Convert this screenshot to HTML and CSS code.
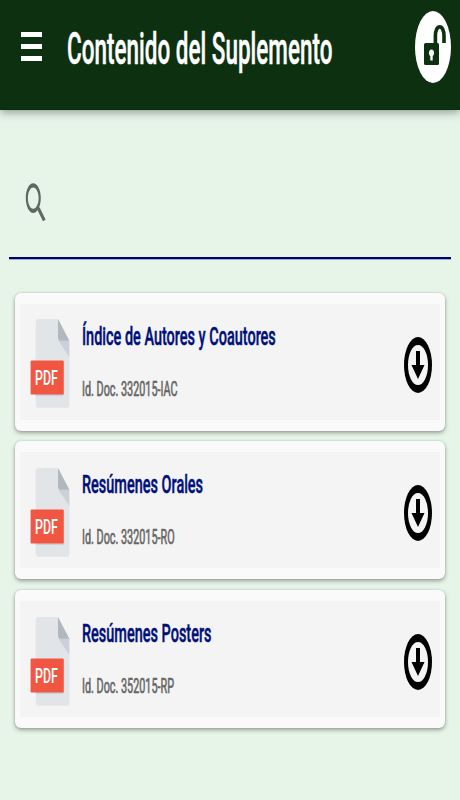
FILE: index.html
```html
<!DOCTYPE html>
<html lang="es">
<head>
    <meta charset="UTF-8">
    <meta name="viewport" content="width=device-width, initial-scale=1.0">
    <title>Contenido del Suplemento</title>
    <link rel="stylesheet" href="styles.css">
</head>
<body>
    <!-- Shared icons -->
    <svg class="sprite">
        <symbol id="pdf" viewBox="0 0 40 90" preserveAspectRatio="none">
            <path d="M8 0H28L39.3 21.5V86Q39.3 88.7 37 88.7H8Q5.7 88.7 5.7 85V4Q5.7 0 8 0Z" fill="#e1e5e8"/>
            <path d="M28.5 21.8H39.3V38Z" fill="#cad1d8"/>
            <path d="M28 0L39.3 21.8H30Q28 21.8 28 18Z" fill="#b0b7bd"/>
            <path d="M5.7 75H33.5V77H5.7Z" fill="#cad1d8"/>
            <rect x="0.6" y="41.6" width="33.2" height="34" rx="1.2" fill="#f15642"/>
        </symbol>
        <symbol id="download" viewBox="0 0 28 56">
            <ellipse cx="14" cy="28" rx="14" ry="28"/>
            <ellipse cx="14" cy="28" rx="10" ry="20" fill="#f4f4f4"/>
            <path d="M12 14H16V28H20.5L14 42L7.5 28H12Z"/>
        </symbol>
    </svg>

    <header class="toolbar">
        <button class="menu-btn" aria-label="Menu"><i></i><i></i><i></i></button>
        <h1><span>Contenido del Suplemento</span></h1>
        <svg class="lock" width="36" height="72" viewBox="0 0 36 72">
            <ellipse cx="18" cy="36" rx="18" ry="36" fill="#fff"/>
            <path d="M20.4 34V25C20.4 12.8 29 12.8 29 25V32" fill="none" stroke="#0d3010" stroke-width="3.6"/>
            <rect x="9" y="32" width="15" height="22" rx="1.5" fill="#0d3010"/>
            <path d="M16.5 38.5C19.8 38.5 19.6 44 17.7 45V49.5H15.3V45C13.4 44 13.2 38.5 16.5 38.5Z" fill="#fff"/>
        </svg>
    </header>

    <main>
        <div class="search">
            <svg width="22" height="42" viewBox="0 0 22 42" fill="none" stroke="#5f6962">
                <path d="M13.2 26L19.3 38.5" stroke-width="3"/>
                <path fill="#5f6962" stroke="none" fill-rule="evenodd" d="M8.2 1.2C12.5 1.2 15.8 8 15.8 16S12.5 31 8.2 31S0.8 24 0.8 16S3.9 1.2 8.2 1.2ZM8.2 5.4C5.2 5.4 2.9 10.2 2.9 16S5.2 26.8 8.2 26.8S13.6 21.8 13.6 16S11.2 5.4 8.2 5.4Z"/>
            </svg>
        </div>

        <div class="card">
            <div class="card-inner">
                <div class="file-icon">
                    <svg><use href="#pdf"/></svg>
                    <span>PDF</span>
                </div>
                <div class="info">
                    <h2><span>Índice de Autores y Coautores</span></h2>
                    <p><span>Id. Doc. 332015-IAC</span></p>
                </div>
                <svg class="download"><use href="#download"/></svg>
            </div>
        </div>

        <div class="card">
            <div class="card-inner">
                <div class="file-icon">
                    <svg><use href="#pdf"/></svg>
                    <span>PDF</span>
                </div>
                <div class="info">
                    <h2><span>Resúmenes Orales</span></h2>
                    <p><span>Id. Doc. 332015-RO</span></p>
                </div>
                <svg class="download"><use href="#download"/></svg>
            </div>
        </div>

        <div class="card">
            <div class="card-inner">
                <div class="file-icon">
                    <svg><use href="#pdf"/></svg>
                    <span>PDF</span>
                </div>
                <div class="info">
                    <h2><span>Resúmenes Posters</span></h2>
                    <p><span>Id. Doc. 352015-RP</span></p>
                </div>
                <svg class="download"><use href="#download"/></svg>
            </div>
        </div>
    </main>
</body>
</html>
```
FILE: styles.css
```css
* {
    box-sizing: border-box;
}
body {
    font-family: Roboto, sans-serif;
    margin: 0;
    height: 100vh;
    overflow: hidden;
    background-color: #e7f5e8;
}
.sprite {
    display: none;
}
h1, h2, p {
    margin: 0;
    white-space: nowrap;
}
/* condensed lettering */
h1 span, h2 span, p span, .file-icon span {
    display: inline-block;
    transform-origin: left center;
    -webkit-text-stroke: 0.5px currentColor;
}
.toolbar {
    display: flex;
    align-items: flex-start;
    height: 110px;
    padding: 11px 9px 0 21px;
    background-color: #0d3010;
    border-bottom: 1px solid #092a0d;
    box-shadow: 0 2px 9px rgba(0,0,0,0.4);
}
.menu-btn {
    display: flex;
    flex-direction: column;
    gap: 7px;
    width: 21px;
    margin-top: 21px;
    padding: 0;
    border: none;
    background: none;
}
.menu-btn i {
    width: 21px;
    height: 5px;
    background-color: #fff;
}
h1 {
    flex: 1;
    width: 0;
    margin: 11px 0 0 25px;
    overflow: hidden;
    font-size: 44px;
    font-weight: 500;
    line-height: 54px;
    color: #fff;
}
h1 span {
    width: 348px;
    transform: scaleX(0.511);
}
.lock {
    flex: none;
}
main {
    padding: 0 15px;
}
.search {
    height: 149px;
    margin: 0 -6px 33.5px;
    padding: 72px 0 0 16px;
    border-bottom: 2px solid #000077;
    box-shadow: 0 1px 0 rgba(0,0,119,0.3);
}
.search svg {
    display: block;
}
.card {
    height: 138px;
    margin-bottom: 10.8px;
    padding: 11px 5px;
    border-radius: 6px;
    background-color: #fafafa;
    box-shadow: 0 2px 4px rgba(0,0,0,0.35), 0 0 2px rgba(0,0,0,0.15);
}
.card-inner {
    display: flex;
    height: 116px;
    padding-right: 8px;
    background-color: #f4f4f4;
}
.file-icon {
    position: relative;
    width: 40px;
    height: 90px;
    margin: 15.6px 0 0 10px;
}
.file-icon svg {
    display: block;
    width: 40px;
    height: 90px;
}
.file-icon span {
    position: absolute;
    left: 5px;
    top: 46px;
    font-size: 21px;
    font-weight: 500;
    line-height: 26px;
    color: #fff;
    transform: scaleX(0.59);
    -webkit-text-stroke: 0;
}
.info {
    flex: 1;
    width: 0;
    padding: 16px 0 0 12px;
}
.info h2 {
    font-size: 26.5px;
    font-weight: 500;
    line-height: 32px;
    color: #00107a;
}
.info h2 span {
    transform: scaleX(0.546);
}
.info p {
    margin-top: 24px;
    font-size: 21px;
    line-height: 26px;
    color: #666;
}
.info p span {
    transform: scaleX(0.515);
    -webkit-text-stroke: 0.7px currentColor;
}
.download {
    width: 28px;
    height: 56px;
    margin: 33.2px 0.5px 0 0;
}
```
